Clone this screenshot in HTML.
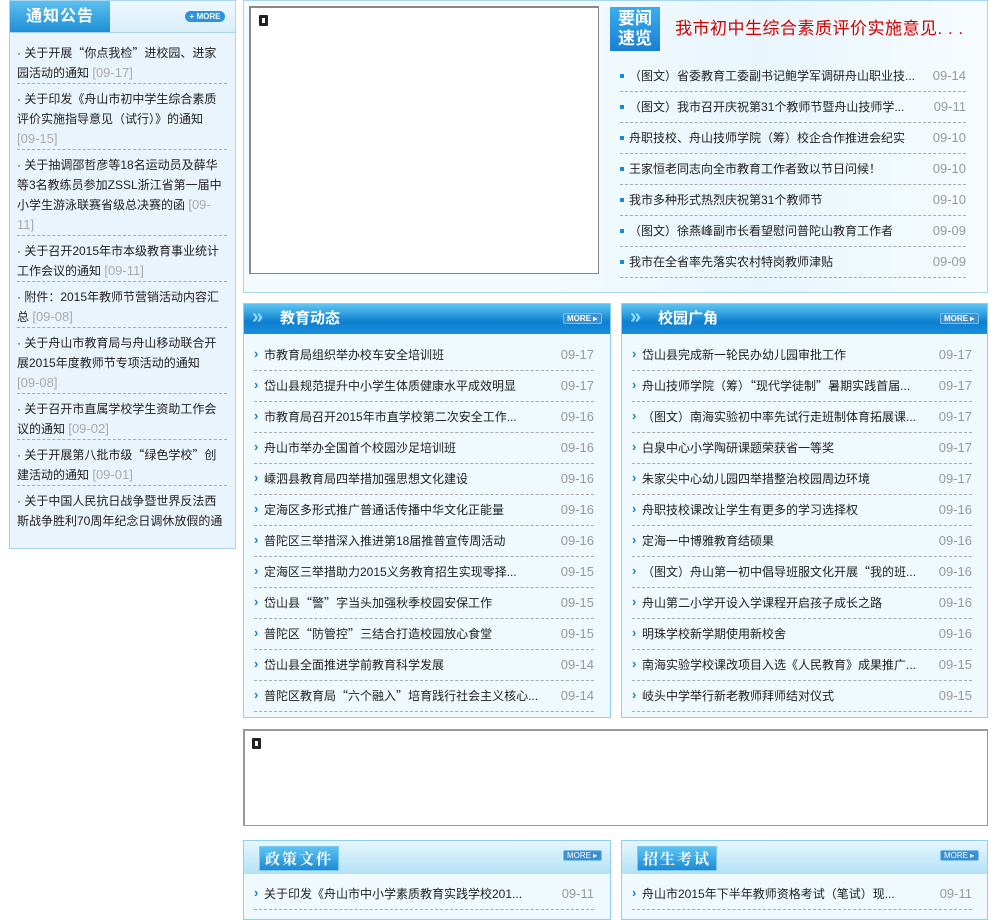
<!DOCTYPE html>
<html><head><meta charset="utf-8"><style>
*{margin:0;padding:0;box-sizing:border-box}
body{width:1000px;height:909px;background:#fff;font-family:"Liberation Sans","Noto Sans CJK SC",sans-serif;font-size:12px;color:#222;position:relative;overflow:hidden}
.abs{position:absolute}
.q{font-family:"Noto Sans CJK SC",sans-serif}
#left{left:9px;top:0;width:227px;height:549px;background:#eaf4fd;border:1px solid #a9d6ef;overflow:hidden}
#left .hd{height:32px;background:linear-gradient(#eef8ff,#d9eefb);border-bottom:1px solid #a9d6ef;position:relative}
#left .tab{position:absolute;left:0;top:0;width:100px;height:31px;background:linear-gradient(#5cc0f0,#1f8fd6);color:#fff;font-size:16px;font-weight:bold;line-height:31px;text-align:center;letter-spacing:1px}
.more1{position:absolute;right:10px;top:10px;width:40px;height:11px;border-radius:6px;background:#2c93dc;color:#fff;font-size:8px;font-weight:bold;line-height:11px;text-align:center}
#left ul{list-style:none;padding:5px 8px 0 7px}
#left li{line-height:20px;padding:5px 0 0;border-bottom:1px dashed #aaa;font-size:12px}
#left li:last-child{border:none}
#left .d{color:#aaa;font-size:13px}
#top{left:243px;top:0;width:745px;height:293px;border:1px solid #a9d6ef;background:linear-gradient(90deg,#f4fbff 40%,#e8f6fc 70%,#f7fcff)}
#photo{left:249px;top:6px;width:350px;height:268px;background:#fff;border:1px solid #888;border-left-width:2px;border-top-width:2px}
.ic{position:absolute;width:9px;height:11px;border:3px solid #222;background:#fff;border-radius:1px}
#yw{left:610px;top:7px;width:50px;height:44px;background:linear-gradient(#3aaef0,#1a7fd2);color:#fff;font-size:17px;font-weight:bold;line-height:20px;text-align:center;padding-top:2px}
#ttl{left:675px;top:14px;color:#d20000;font-size:17px;letter-spacing:.5px}
.rl{list-style:none;position:absolute}
.rl li{position:relative;border-bottom:1px dashed #aaa;white-space:nowrap}
.rl .dt{position:absolute;right:0;color:#999;font-size:13px}
#news{left:620px;top:61px;width:346px}
#news li{height:31px;line-height:30px;padding-left:9px}
#news li:before{content:"";position:absolute;left:0;top:13px;width:4px;height:4px;background:#1a8ad8}
.box{border:1px solid #8dd0ef;background:#eff9fe}
.bh{height:30px;background:linear-gradient(#5fc6f2,#0d7fd0 60%,#1a8fde);position:relative;color:#fff;font-size:15px;font-weight:bold;line-height:30px;padding-left:36px}
.bh:before{content:"»";position:absolute;left:8px;top:-2px;font-size:20px;color:#8fe0ff}
.more2{position:absolute;right:8px;top:9px;width:39px;height:11px;background:#3d8fd0;border:1px solid #7bc0ee;color:#fff;font-size:8px;line-height:10px;padding-left:3px;border-radius:2px}
.lst li{height:31px;line-height:30px;padding-left:10px}
.lst li:before{content:"›";position:absolute;left:0;top:-1px;color:#1a7fd2;font-weight:bold;font-size:13px}
.bh2{height:33px;background:linear-gradient(#e6f6fd,#b3e2f6);position:relative}
.bh2 .t{position:absolute;left:15px;top:5px;width:80px;height:25px;background:linear-gradient(#5cc4f2,#1c8ad6);border:1px solid #7ec8ee;color:#fff;font-family:"Noto Serif CJK SC",serif;font-weight:bold;font-size:15px;line-height:23px;text-align:center;letter-spacing:2px}
</style></head><body>
<div id="left" class="abs">
<div class="hd"><div class="tab">通知公告</div><div class="more1">+ MORE</div></div>
<ul>
<li>· 关于开展<span class="q">“</span>你点我检<span class="q">”</span>进校园、进家园活动的通知 <span class="d">[09-17]</span></li>
<li>· 关于印发《舟山市初中学生综合素质评价实施指导意见（试行）》的通知 <span class="d">[09-15]</span></li>
<li>· 关于抽调邵哲彦等18名运动员及薛华等3名教练员参加ZSSL浙江省第一届中小学生游泳联赛省级总决赛的函 <span class="d">[09-11]</span></li>
<li>· 关于召开2015年市本级教育事业统计工作会议的通知 <span class="d">[09-11]</span></li>
<li>· 附件：2015年教师节营销活动内容汇总 <span class="d">[09-08]</span></li>
<li>· 关于舟山市教育局与舟山移动联合开展2015年度教师节专项活动的通知 <span class="d" style="white-space:nowrap">[09-08]</span></li>
<li>· 关于召开市直属学校学生资助工作会议的通知 <span class="d">[09-02]</span></li>
<li>· 关于开展第八批市级<span class="q">“</span>绿色学校<span class="q">”</span>创建活动的通知 <span class="d">[09-01]</span></li>
<li>· 关于中国人民抗日战争暨世界反法西斯战争胜利70周年纪念日调休放假的通</li>
</ul></div>

<div id="top" class="abs"></div>
<div id="photo" class="abs"><div class="ic" style="left:8px;top:7px"></div></div>
<div id="yw" class="abs">要闻<br>速览</div>
<div id="ttl" class="abs">我市初中生综合素质评价实施意见. . .</div>
<ul id="news" class="rl">
<li>（图文）省委教育工委副书记鲍学军调研舟山职业技...<span class="dt">09-14</span></li>
<li>（图文）我市召开庆祝第31个教师节暨舟山技师学...<span class="dt">09-11</span></li>
<li>舟职技校、舟山技师学院（筹）校企合作推进会纪实<span class="dt">09-10</span></li>
<li>王家恒老同志向全市教育工作者致以节日问候！<span class="dt">09-10</span></li>
<li>我市多种形式热烈庆祝第31个教师节<span class="dt">09-10</span></li>
<li>（图文）徐燕峰副市长看望慰问普陀山教育工作者<span class="dt">09-09</span></li>
<li>我市在全省率先落实农村特岗教师津贴<span class="dt">09-09</span></li>
</ul>

<div class="abs box" style="left:243px;top:303px;width:368px;height:415px">
<div class="bh">教育动态<div class="more2">MORE ▸</div></div>
<ul class="rl lst" style="left:10px;top:36px;width:340px">
<li>市教育局组织举办校车安全培训班<span class="dt">09-17</span></li>
<li>岱山县规范提升中小学生体质健康水平成效明显<span class="dt">09-17</span></li>
<li>市教育局召开2015年市直学校第二次安全工作...<span class="dt">09-16</span></li>
<li>舟山市举办全国首个校园沙足培训班<span class="dt">09-16</span></li>
<li>嵊泗县教育局四举措加强思想文化建设<span class="dt">09-16</span></li>
<li>定海区多形式推广普通话传播中华文化正能量<span class="dt">09-16</span></li>
<li>普陀区三举措深入推进第18届推普宣传周活动<span class="dt">09-16</span></li>
<li>定海区三举措助力2015义务教育招生实现零择...<span class="dt">09-15</span></li>
<li>岱山县<span class="q">“</span>警<span class="q">”</span>字当头加强秋季校园安保工作<span class="dt">09-15</span></li>
<li>普陀区<span class="q">“</span>防管控<span class="q">”</span>三结合打造校园放心食堂<span class="dt">09-15</span></li>
<li>岱山县全面推进学前教育科学发展<span class="dt">09-14</span></li>
<li>普陀区教育局<span class="q">“</span>六个融入<span class="q">”</span>培育践行社会主义核心...<span class="dt">09-14</span></li>
</ul></div>

<div class="abs box" style="left:621px;top:303px;width:367px;height:415px">
<div class="bh">校园广角<div class="more2">MORE ▸</div></div>
<ul class="rl lst" style="left:10px;top:36px;width:340px">
<li>岱山县完成新一轮民办幼儿园审批工作<span class="dt">09-17</span></li>
<li>舟山技师学院（筹）<span class="q">“</span>现代学徒制<span class="q">”</span>暑期实践首届...<span class="dt">09-17</span></li>
<li>（图文）南海实验初中率先试行走班制体育拓展课...<span class="dt">09-17</span></li>
<li>白泉中心小学陶研课题荣获省一等奖<span class="dt">09-17</span></li>
<li>朱家尖中心幼儿园四举措整治校园周边环境<span class="dt">09-17</span></li>
<li>舟职技校课改让学生有更多的学习选择权<span class="dt">09-16</span></li>
<li>定海一中博雅教育结硕果<span class="dt">09-16</span></li>
<li>（图文）舟山第一初中倡导班服文化开展<span class="q">“</span>我的班...<span class="dt">09-16</span></li>
<li>舟山第二小学开设入学课程开启孩子成长之路<span class="dt">09-16</span></li>
<li>明珠学校新学期使用新校舍<span class="dt">09-16</span></li>
<li>南海实验学校课改项目入选《人民教育》成果推广...<span class="dt">09-15</span></li>
<li>岐头中学举行新老教师拜师结对仪式<span class="dt">09-15</span></li>
</ul></div>

<div class="abs" style="left:243px;top:729px;width:745px;height:97px;border:1px solid #999;border-left-width:2px;border-top-width:2px;background:#fff"><div class="ic" style="left:7px;top:7px"></div></div>

<div class="abs box" style="left:243px;top:840px;width:368px;height:80px">
<div class="bh2"><div class="t">政策文件</div><div class="more2">MORE ▸</div></div>
<ul class="rl lst" style="left:10px;top:38px;width:340px">
<li>关于印发《舟山市中小学素质教育实践学校201...<span class="dt">09-11</span></li></ul></div>
<div class="abs box" style="left:621px;top:840px;width:367px;height:80px">
<div class="bh2"><div class="t">招生考试</div><div class="more2">MORE ▸</div></div>
<ul class="rl lst" style="left:10px;top:38px;width:340px">
<li>舟山市2015年下半年教师资格考试（笔试）现...<span class="dt">09-11</span></li></ul></div>
</body></html>
